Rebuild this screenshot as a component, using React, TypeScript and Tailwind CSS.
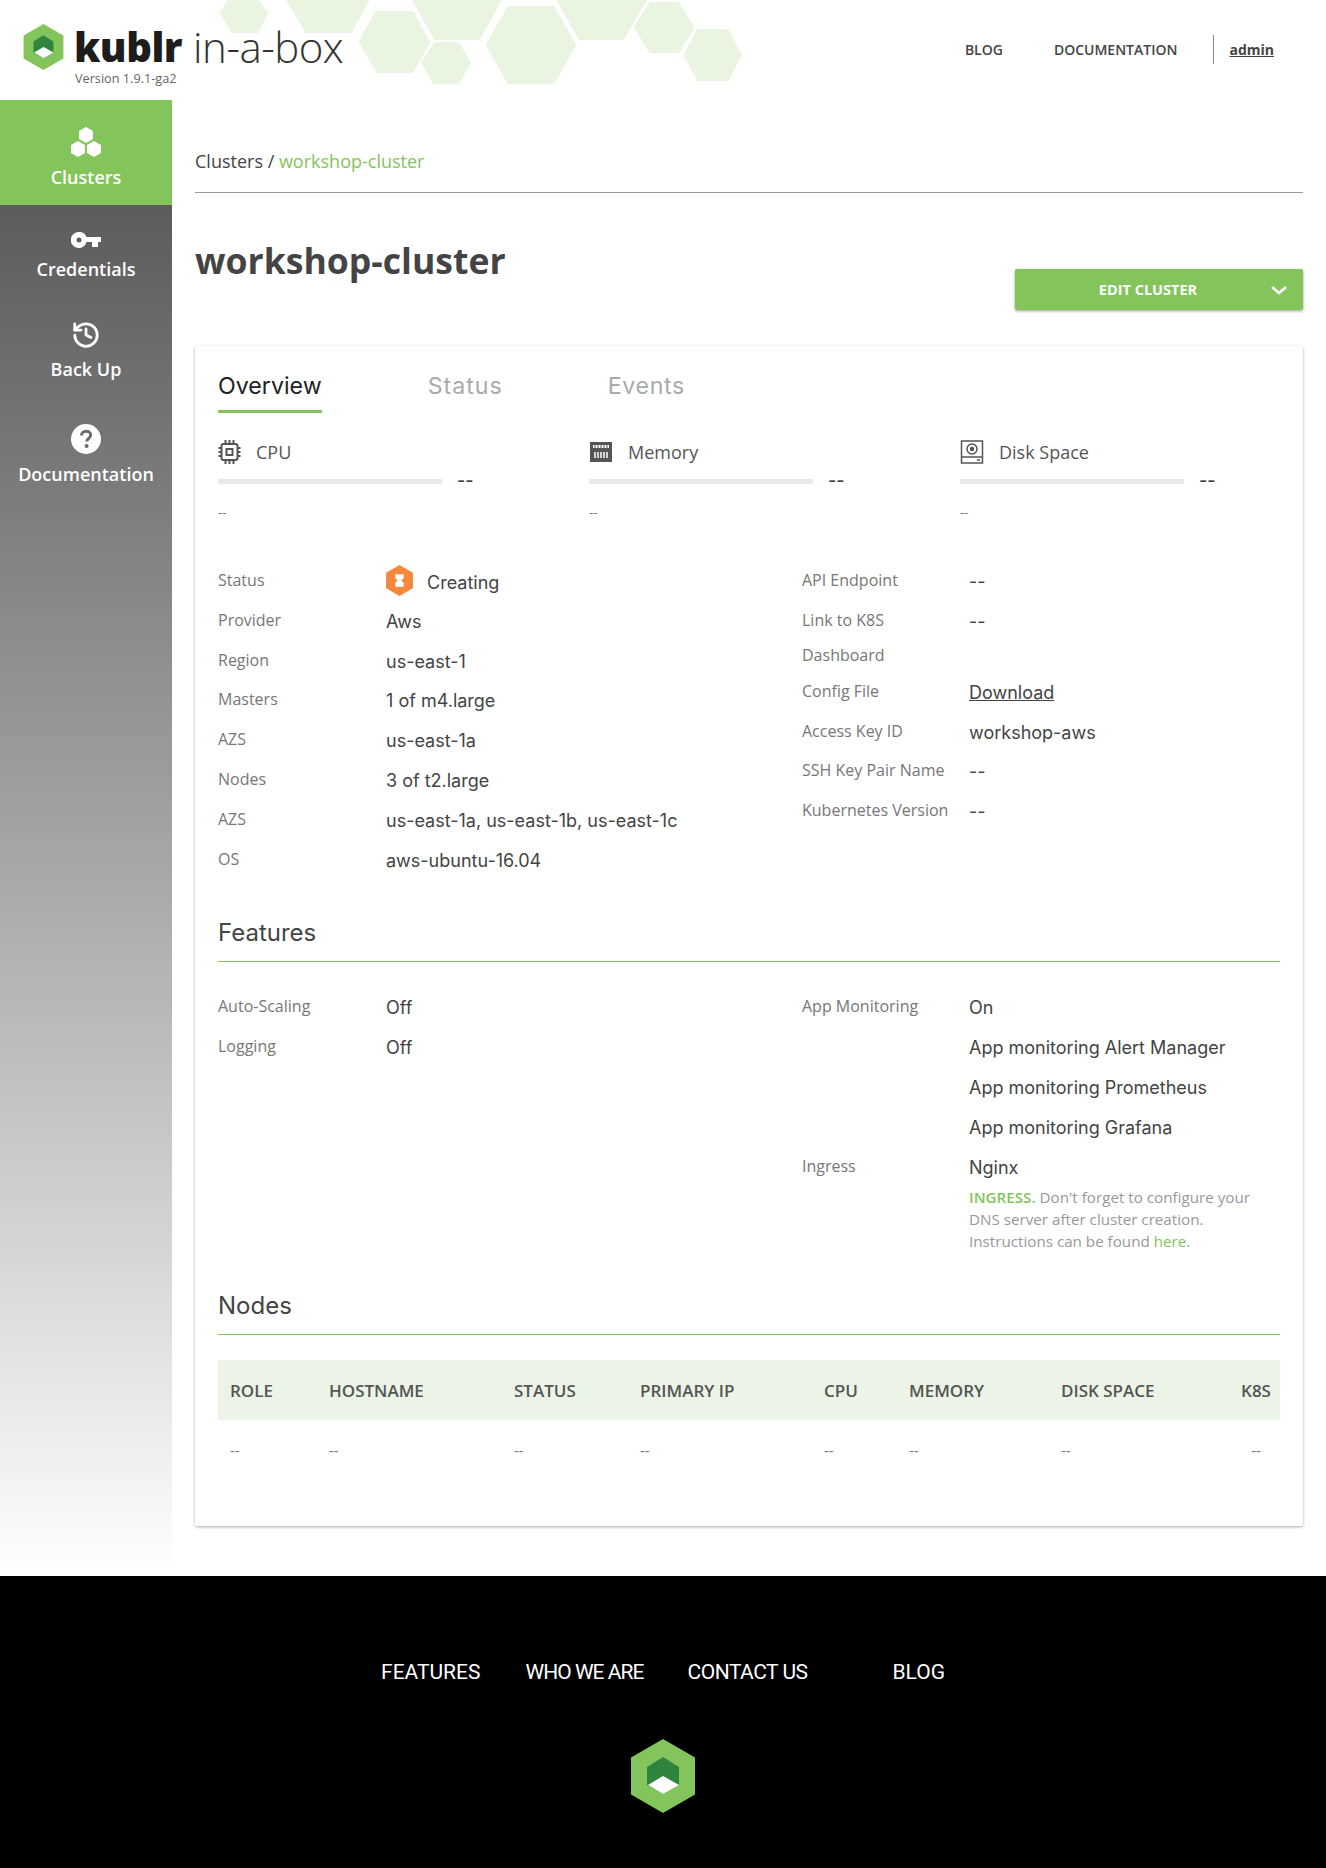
import { History } from "lucide-react";
import { ReactNode } from "react";

const font = { fontFamily: "'Open Sans', sans-serif" };

const KublrLogo = ({ className }: { className: string }) => (
  <svg viewBox="0 0 64 74" className={className}>
    <polygon points="32,0 64,18.5 64,55.5 32,74 0,55.5 0,18.5" fill="#83c55a" />
    <polygon points="32,18 48,28 48,46 32,55 16,46 16,28" fill="#2f853d" />
    <polygon points="32,37 48,46 32,55 17,46" fill="#ffffff" />
  </svg>
);

const headerHexes = [
  "229,0 261,0 270,13 260,33 233,33 221,13",
  "288,0 372,0 354,33 308,33",
  "378,11 416,11 433,42 416,73 379,73 361,42",
  "415,0 505,0 483,40 437,40",
  "437,42 462,42 474,63 462,84 436,84 424,63",
  "511,6 558,6 580,45 558,84 511,84 489,45",
  "560,0 651,0 628,40 583,40",
  "654,2 683,2 699,27 684,53 654,53 638,27",
  "702,29 733,29 747,55 733,81 702,81 688,55",
];

const Header = () => (
  <header className="relative flex h-[100px] items-start bg-white">
    <svg viewBox="0 0 760 100" preserveAspectRatio="none" className="absolute left-0 top-0 h-[100px] w-[755px]">
      {headerHexes.map((p) => (
        <polygon key={p} points={p} fill="#e9f5e0" />
      ))}
    </svg>
    <div className="relative ml-[23px] mt-[24px] flex items-start">
      <KublrLogo className="h-[46px] w-[41px]" />
      <div className="ml-[10px]">
        <div className="flex h-[46px] items-center">
          <span className="text-[40px] font-extrabold leading-none tracking-[-0.5px] text-[#1d1d1b]">kublr</span>
          <span className="ml-[11px] text-[42px] font-light leading-none tracking-[-0.5px] text-[#333]">in-a-box</span>
        </div>
      </div>
    </div>
    <div className="absolute left-[75px] top-[69px] text-[12.7px] leading-[18px] text-[#666]">Version 1.9.1-ga2</div>
    <nav className="relative ml-auto mr-[52px] mt-[35px] flex h-[29px] items-center text-[14px] font-semibold text-[#444]">
      <span>BLOG</span>
      <span className="ml-[51px]">DOCUMENTATION</span>
      <span className="ml-[36px] h-[29px] w-px bg-[#888]" />
      <span className="ml-[15px] font-bold underline">admin</span>
    </nav>
  </header>
);

const ClusterIcon = () => (
  <svg viewBox="0 0 32 30" className="h-[30px] w-[32px]" fill="#fff">
    <polygon points="16,0 23,4 23,12 16,16 9,12 9,4" />
    <polygon points="8,14 15,18 15,26 8,30 1,26 1,18" />
    <polygon points="24,14 31,18 31,26 24,30 17,26 17,18" />
  </svg>
);

const KeyIcon = () => (
  <svg viewBox="0 0 30 16" className="h-[16px] w-[30px]" fill="#fff">
    <path fillRule="evenodd" d="M8 0a8 8 0 0 1 7.5 5H30v5h-3v5h-6v-5h-5.500A8 8 0 1 1 8 0Zm0 5.500a2.500 2.500 0 1 0 0 5 2.500 2.500 0 0 0 0-5Z" />
  </svg>
);

const HelpIcon = () => (
  <svg viewBox="0 0 30 30" className="h-[30px] w-[30px]">
    <circle cx="15" cy="15" r="15" fill="#fff" />
    <path d="M10.500 11.500c0-2.700 2-4.300 4.600-4.300 2.700 0 4.600 1.600 4.600 3.900 0 3.300-4 3.400-4 6.400" fill="none" stroke="#6b6b6b" strokeWidth="3" />
    <circle cx="15.600" cy="22" r="2" fill="#6b6b6b" />
  </svg>
);

const SideItem = ({ icon, label, className }: { icon: ReactNode; label: string; className: string }) => (
  <div className={`flex flex-col items-center text-[18px] font-semibold leading-[24px] text-white ${className}`}>
    <div className="flex items-end justify-center">{icon}</div>
    <span>{label}</span>
  </div>
);

const Sidebar = () => (
  <aside className="flex w-[172px] shrink-0 flex-col bg-gradient-to-b from-[#515151] to-white">
    <div className="bg-[#83c55a] pb-[16px] pt-[27px]">
      <SideItem icon={<ClusterIcon />} label="Clusters" className="gap-[8px]" />
    </div>
    <SideItem icon={<KeyIcon />} label="Credentials" className="mt-[27px] gap-[9px]" />
    <SideItem icon={<History size={30} strokeWidth={2.2} className="text-white" />} label="Back Up" className="mt-[39px] gap-[7px]" />
    <SideItem icon={<HelpIcon />} label="Documentation" className="mt-[43px] gap-[8px]" />
  </aside>
);

const CpuIcon = () => (
  <svg viewBox="0 0 22 24" className="h-[24px] w-[23px]" fill="none" stroke="#555" strokeWidth="2">
    <rect x="3" y="4" width="16" height="16" rx="2" />
    <rect x="8" y="9" width="6" height="6" />
    <path d="M7 0v4M11 0v4M15 0v4M7 20v4M11 20v4M15 20v4M0 8h3M0 12h3M0 16h3M19 8h3M19 12h3M19 16h3" />
  </svg>
);

const MemoryIcon = () => (
  <svg viewBox="0 0 24 22" className="h-[22px] w-[24px]">
    <path d="M1 1h22v20H1z" fill="#555" />
    <path d="M4 4h16v3H4z" fill="#fff" />
    <path d="M6 4v3M9 4v3M12 4v3M15 4v3M18 4v3" stroke="#555" />
    <path d="M6 11v6M9 11v6M12 11v6M15 11v6M18 11v6" stroke="#fff" strokeWidth="1.500" />
  </svg>
);

const DiskIcon = () => (
  <svg viewBox="0 0 24 24" className="h-[24px] w-[24px]" fill="none" stroke="#555" strokeWidth="1.500">
    <path d="M1.500 1h21v22h-21z" />
    <path d="M1.500 17h21" />
    <circle cx="12" cy="9" r="5" />
    <circle cx="12" cy="9" r="1.500" fill="#555" />
    <path d="M17 20h3" />
  </svg>
);

const Metric = ({ icon, label }: { icon: ReactNode; label: string }) => (
  <div>
    <div className="flex h-[24px] items-center gap-[15px] text-[18px] text-[#555]">
      {icon}
      <span>{label}</span>
    </div>
    <div className="mt-[5px] flex items-center">
      <div className="h-[5px] w-[224px] bg-[#e9e9e9]" />
      <span className="ml-[15px] text-[18px] font-medium leading-[24px] text-[#444] [font-family:Inter,sans-serif]">--</span>
    </div>
    <div className="mt-[10px] text-[13px] leading-[18px] text-[#777]">--</div>
  </div>
);

const Row = ({ label, children, wide }: { label: ReactNode; children?: ReactNode; wide?: boolean }) => (
  <div className="flex min-h-[39.8px] items-start">
    <div className={`${wide ? "w-[167px]" : "w-[168px]"} shrink-0 text-[16px] leading-[22px] text-[#777]`}>{label}</div>
    <div className="pt-px text-[18px] leading-[24px] text-[#444] [font-family:Inter,sans-serif]">{children}</div>
  </div>
);

const SectionTitle = ({ children }: { children: ReactNode }) => (
  <div className="border-b border-[#83c55a] pb-[12px] text-[24px] leading-[32px] text-[#444] [font-family:Inter,sans-serif]">{children}</div>
);

const columns = [
  ["ROLE", "pl-3"],
  ["HOSTNAME", "pl-3"],
  ["STATUS", "pl-3"],
  ["PRIMARY IP", "pl-3"],
  ["CPU", "pl-3"],
  ["MEMORY", "pl-3"],
  ["DISK SPACE", "pl-3"],
  ["K8S", "text-center"],
];

const Card = () => (
  <section className="mt-[36px] h-[1180px] rounded-[2px] bg-white px-[23px] pt-[24px] shadow-[0_1px_3px_rgba(0,0,0,0.35)]">
    <div className="flex text-[23.2px] leading-[32px] text-[#aaa] [font-family:Inter,sans-serif]">
      <div className="border-b-[3px] border-[#83c55a] pb-[8px] text-[#222]">Overview</div>
      <div className="ml-[106px] tracking-[1px]">Status</div>
      <div className="ml-[105px] tracking-[0.6px]">Events</div>
    </div>
    <div className="mt-[27px] grid grid-cols-[371px_371px_1fr]">
      <Metric icon={<CpuIcon />} label="CPU" />
      <Metric icon={<MemoryIcon />} label="Memory" />
      <Metric icon={<DiskIcon />} label="Disk Space" />
    </div>
    <div className="mt-[48px] grid grid-cols-[584px_1fr]">
      <div>
        <Row label="Status">
          <span className="flex items-center gap-[14px]">
            <svg viewBox="0 0 26 30" className="-mt-[5px] h-[31px] w-[27px]">
              <polygon points="13,0 26,7.500 26,22.500 13,30 0,22.500 0,7.500" fill="#f6883c" />
              <path d="M9 9h8v4l-2.500 2 2.500 2v4H9v-4l2.500-2L9 13z" fill="#fff" />
            </svg>
            Creating
          </span>
        </Row>
        <Row label="Provider">Aws</Row>
        <Row label="Region">us-east-1</Row>
        <Row label="Masters">1 of m4.large</Row>
        <Row label="AZS">us-east-1a</Row>
        <Row label="Nodes">3 of t2.large</Row>
        <Row label="AZS">us-east-1a, us-east-1b, us-east-1c</Row>
        <Row label="OS">aws-ubuntu-16.04</Row>
      </div>
      <div>
        <Row wide label="API Endpoint">--</Row>
        <Row wide label={<>Link to K8S<br /><span className="mt-[13px] mb-[14px] block">Dashboard</span></>}>--</Row>
        <Row wide label="Config File"><span className="underline">Download</span></Row>
        <Row wide label="Access Key ID">workshop-aws</Row>
        <Row wide label="SSH Key Pair Name">--</Row>
        <Row wide label="Kubernetes Version">--</Row>
      </div>
    </div>
    <div className="mt-[30px]">
      <SectionTitle>Features</SectionTitle>
    </div>
    <div className="mt-[33px] grid grid-cols-[584px_1fr]">
      <div>
        <Row label="Auto-Scaling">Off</Row>
        <Row label="Logging">Off</Row>
      </div>
      <div>
        <Row wide label="App Monitoring">On</Row>
        <Row wide label="">App monitoring Alert Manager</Row>
        <Row wide label="">App monitoring Prometheus</Row>
        <Row wide label="">App monitoring Grafana</Row>
        <Row wide label="Ingress">Nginx</Row>
        <p className="-mt-[8px] ml-[167px] w-[300px] text-[15.2px] leading-[22px] text-[#999]">
          <span className="font-semibold text-[#83c55a]">INGRESS.</span> Don't forget to configure your DNS server after cluster creation. Instructions can be found <span className="text-[#83c55a]">here</span>.
        </p>
      </div>
    </div>
    <div className="mt-[38px]">
      <SectionTitle>Nodes</SectionTitle>
    </div>
    <div className="mt-[25px] grid h-[60px] grid-cols-[99px_185px_126px_184px_85px_152px_183px_48px] items-center bg-[#ebf4e6] text-[17px] font-semibold text-[#555]">
      {columns.map(([name, cls]) => (
        <div key={name} className={`whitespace-nowrap ${cls}`}>{name}</div>
      ))}
    </div>
    <div className="grid h-[60px] grid-cols-[99px_185px_126px_184px_85px_152px_183px_48px] items-center text-[15px] text-[#777]">
      {columns.map(([name, cls]) => (
        <div key={name} className={cls}>--</div>
      ))}
    </div>
  </section>
);

const Footer = () => (
  <footer className="flex h-[292px] flex-col items-center bg-black">
    <nav className="mt-[82px] flex h-[28px] items-center text-[21px] leading-[28px] text-white [font-family:Roboto,sans-serif]">
      <span>FEATURES</span>
      <span className="ml-[45px] tracking-[-0.95px]">WHO WE ARE</span>
      <span className="ml-[44px] tracking-[-0.5px]">CONTACT US</span>
      <span className="ml-[85px]">BLOG</span>
    </nav>
    <KublrLogo className="mt-[53px] h-[74px] w-[64px]" />
  </footer>
);

export default function App() {
  return (
    <div className="w-[1326px] bg-white" style={font}>
      <Header />
      <div className="flex h-[1476px]">
        <Sidebar />
        <main className="flex-1 pl-[23px] pr-[23px]">
          <div className="flex h-[93px] items-end border-b border-[#999] pb-[18px] text-[18px] leading-[25px] text-[#444]">
            Clusters /&nbsp;<span className="text-[#83c55a]">workshop-cluster</span>
          </div>
          <div className="flex items-start justify-between">
            <h1 className="mt-[43px] text-[35.6px] font-bold leading-[48px] text-[#444]">workshop-cluster</h1>
            <button className="relative mt-[76px] h-[41px] w-[288px] rounded-[2px] bg-[#83c55a] pr-[22px] text-[14.5px] font-bold text-white shadow-[0_1px_3px_rgba(0,0,0,0.4)]">
              EDIT CLUSTER
              <svg viewBox="0 0 16 10" className="absolute right-[16px] top-[17px] h-[10px] w-[16px]" fill="none" stroke="#fff" strokeWidth="2.500">
                <path d="M1 1l7 6 7-6" />
              </svg>
            </button>
          </div>
          <Card />
        </main>
      </div>
      <Footer />
    </div>
  );
}
